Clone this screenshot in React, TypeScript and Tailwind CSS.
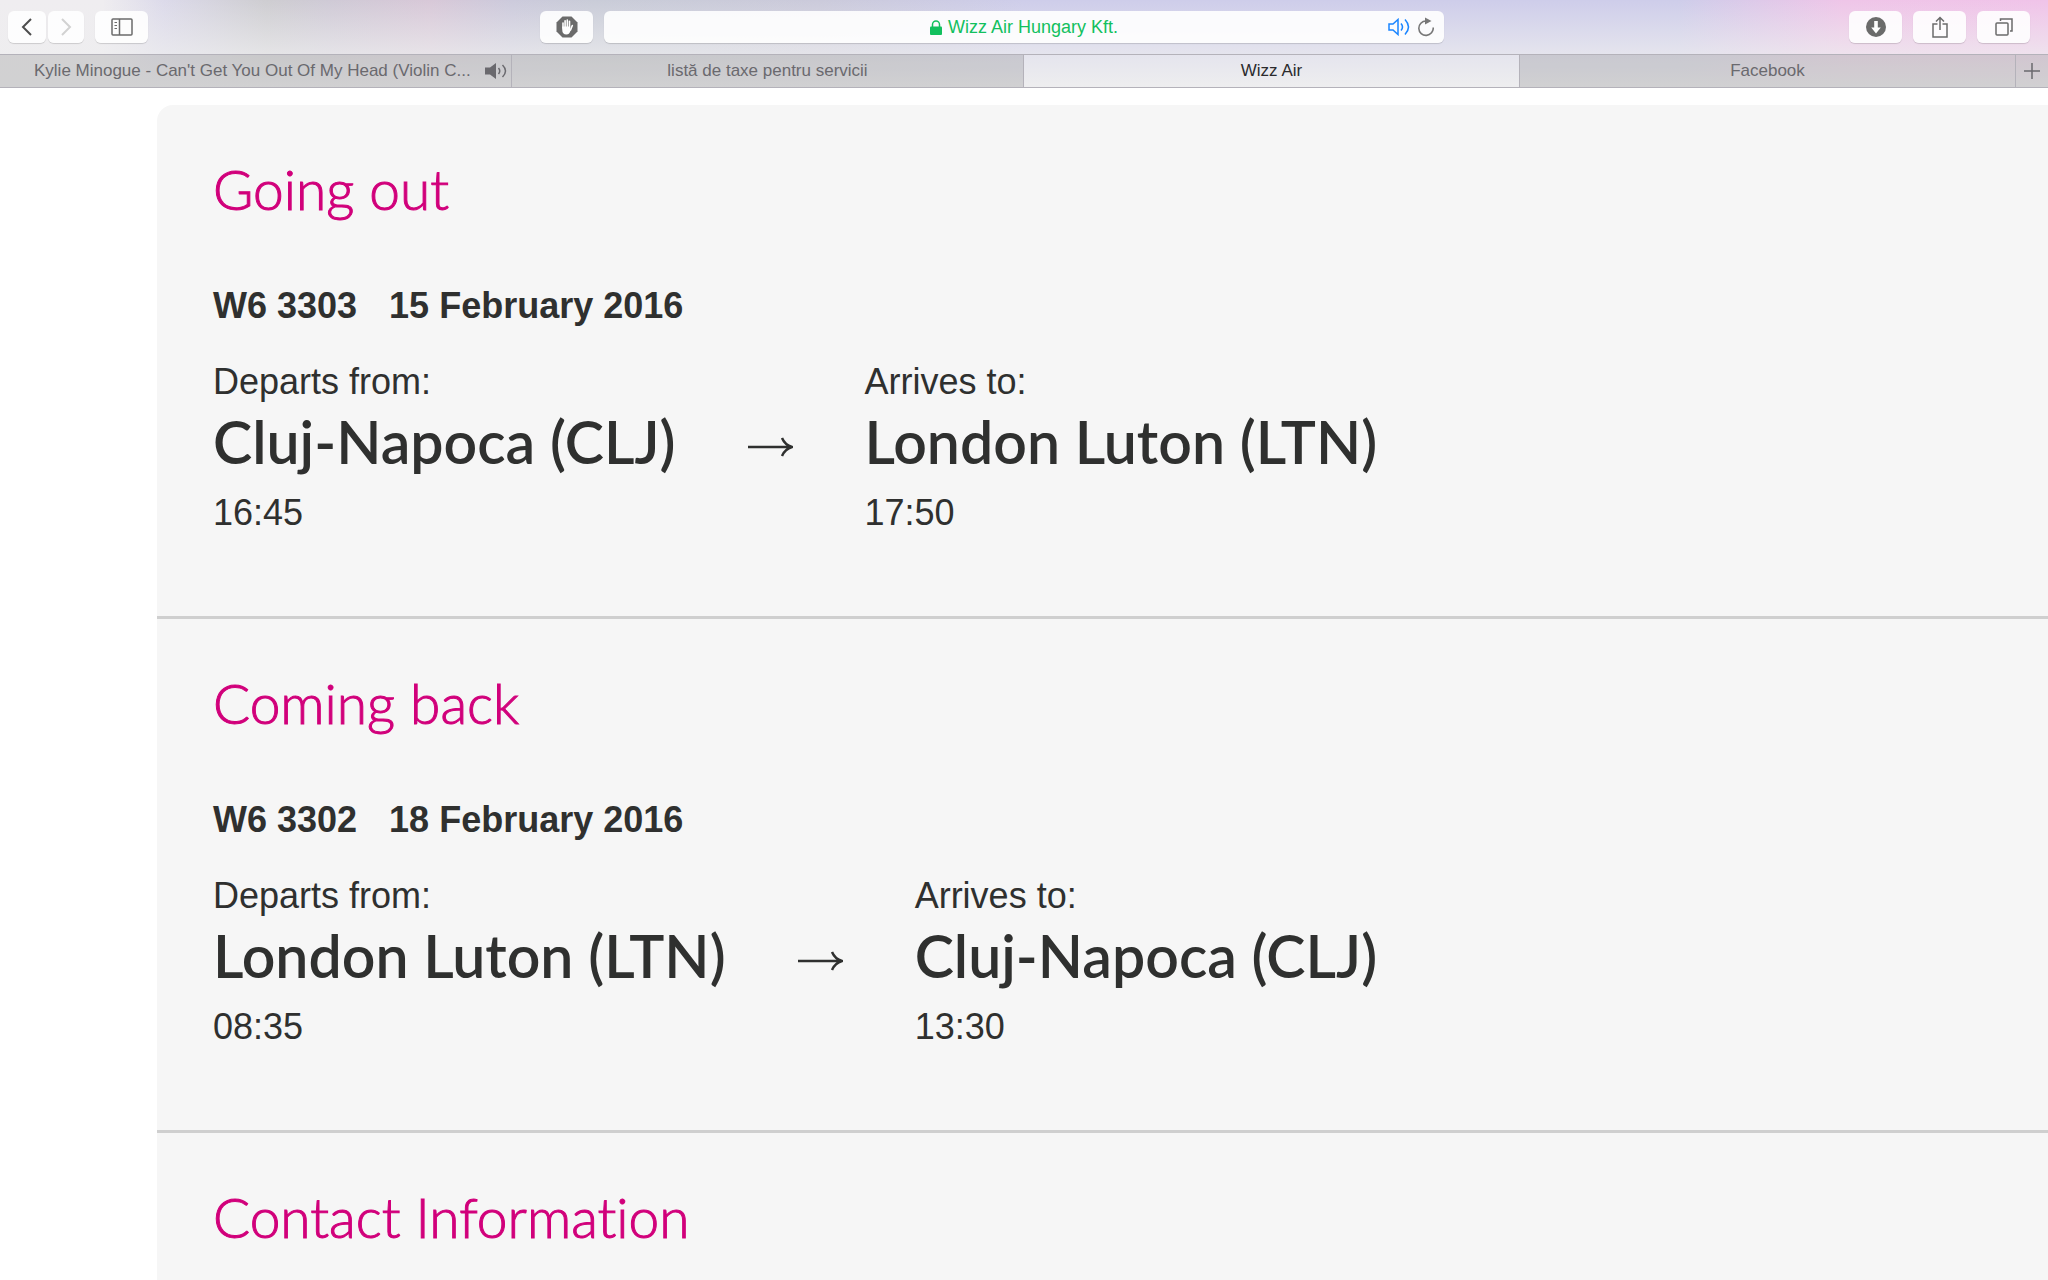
import type { ReactNode } from "react"

const legs = [
  {
    title: "Going out",
    flight: "W6 3303",
    date: "15 February 2016",
    from: { city: "Cluj-Napoca (CLJ)", time: "16:45" },
    to: { city: "London Luton (LTN)", time: "17:50" },
  },
  {
    title: "Coming back",
    flight: "W6 3302",
    date: "18 February 2016",
    from: { city: "London Luton (LTN)", time: "08:35" },
    to: { city: "Cluj-Napoca (CLJ)", time: "13:30" },
  },
]

function ToolbarButton({ label, className, children }: { label: string; className: string; children: ReactNode }) {
  return (
    <button
      type="button"
      aria-label={label}
      className={`flex h-8 shrink-0 items-center justify-center rounded-md bg-white/90 text-[#6b6b6b] shadow-[0_1px_1px_rgba(0,0,0,0.15)] ${className}`}
    >
      {children}
    </button>
  )
}

function Toolbar() {
  return (
    <div className="flex h-[54px] items-center px-2">
      <div className="flex flex-1 items-center">
        <ToolbarButton label="Back" className="w-[38px]">
          <svg width="12" height="18" viewBox="0 0 12 18" fill="none" stroke="#4d4d4d" strokeWidth="2">
            <path d="M10 1 2 9l8 8" />
          </svg>
        </ToolbarButton>
        <ToolbarButton label="Forward" className="ml-0.5 w-9">
          <svg width="12" height="18" viewBox="0 0 12 18" fill="none" stroke="#d2d2d2" strokeWidth="2">
            <path d="m2 1 8 8-8 8" />
          </svg>
        </ToolbarButton>
        <ToolbarButton label="Show sidebar" className="ml-[11px] w-[53px]">
          <svg width="22" height="18" viewBox="0 0 22 18" fill="none" stroke="currentColor">
            <rect x="1" y="1" width="20" height="16" rx="1" strokeWidth="1.5" />
            <path d="M8.5 1v16" strokeWidth="1.5" />
            <path d="M3.500 4.500h2.500M3.500 7.500h2.500M3.500 10.500h2.500" />
          </svg>
        </ToolbarButton>
        <ToolbarButton label="Content blocker" className="ml-auto w-[53px]">
          <svg width="22" height="22" viewBox="0 0 22 22">
            <path d="M6.500.5h9l6 6v9l-6 6h-9l-6-6v-9z" fill="currentColor" />
            <g stroke="#fff" strokeWidth="1.600" strokeLinecap="round">
              <path d="M7 12V7M9.100 11V4.800M11.300 11V4M13.500 11V5.200" />
              <path d="m14.500 14 1.800-4.500" />
            </g>
            <path d="M6.200 10.500h8.100v2.500l1.200-1-1.300 3.500q-.9 3-3.700 3-4.300 0-4.300-5z" fill="#fff" />
          </svg>
        </ToolbarButton>
      </div>

      <div className="mx-[11px] flex h-8 w-[41.3%] items-center rounded-md bg-white/90 shadow-[0_1px_1px_rgba(0,0,0,0.15)]">
        <div className="flex flex-1 items-center justify-center gap-1.5 pl-14 text-lg text-[#12c05e]">
          <svg width="12" height="15" viewBox="0 0 12 15" fill="none">
            <rect y="6.500" width="12" height="8.500" rx="1" fill="currentColor" />
            <path d="M2.500 7V4.500a3.500 3.500 0 0 1 7 0V7" stroke="currentColor" strokeWidth="1.500" />
          </svg>
          <span>Wizz Air Hungary Kft.</span>
        </div>
        <button type="button" aria-label="Mute tab" className="mr-2 text-[#1a85ff]">
          <svg width="22" height="18" viewBox="0 0 22 18" fill="none" stroke="currentColor" strokeWidth="1.500">
            <path d="M1 6h4l5-4.500v15L5 12H1z" />
            <path d="M13 5.500q3 3.500 0 7M17 1.500q7 7.500 0 15" />
          </svg>
        </button>
        <button type="button" aria-label="Reload" className="mr-2.5 text-[#777]">
          <svg width="16" height="20" viewBox="0 0 16 20" fill="none">
            <path d="M8 4A7.200 7.200 0 1 0 15.200 10.500" stroke="currentColor" strokeWidth="1.600" />
            <path d="M7 .5v7l6.500-3.500z" fill="currentColor" />
          </svg>
        </button>
      </div>

      <div className="flex flex-1 items-center justify-end gap-[11px]">
        <ToolbarButton label="Downloads" className="w-[53px]">
          <svg width="20" height="20" viewBox="0 0 20 20">
            <circle cx="10" cy="10" r="10" fill="currentColor" />
            <path d="M8.200 4h3.600v6.500h3L10 16.500l-4.800-6h3z" fill="#fff" />
          </svg>
        </ToolbarButton>
        <ToolbarButton label="Share" className="w-[53px]">
          <svg width="16" height="22" viewBox="0 0 16 22" fill="none" stroke="currentColor" strokeWidth="1.500">
            <path d="M5.500 8H1v13h14V8h-4.500M8 14V1.500M4 5.500l4-4 4 4" />
          </svg>
        </ToolbarButton>
        <ToolbarButton label="Show all tabs" className="mr-2.5 w-[53px]">
          <svg width="18" height="18" viewBox="0 0 18 18" fill="none" stroke="currentColor" strokeWidth="1.500">
            <rect x="1" y="5" width="12" height="12" rx="1" />
            <path d="M5.500 3V1H17v12h-2" />
          </svg>
        </ToolbarButton>
      </div>
    </div>
  )
}

function TabBar() {
  return (
    <div className="flex h-[34px] border-y border-[#b4b2ba] text-[17px] text-[#6a696e]">
      <button type="button" className="flex basis-1/4 items-center justify-between border-r border-[#b4b2ba] bg-black/12 pr-1 pl-[34px]">
        <span className="truncate">Kylie Minogue - Can't Get You Out Of My Head (Violin C...</span>
        <svg className="shrink-0" width="22" height="16" viewBox="0 0 22 16" fill="none" stroke="currentColor" strokeWidth="1.500">
          <path d="M0 4.500h5L11 0v16l-6-4.500H0z" fill="currentColor" stroke="none" />
          <path d="M13.500 5q2.500 3 0 6M17.500 2q6 6 0 12" />
        </svg>
      </button>
      <button type="button" className="basis-1/4 border-r border-[#b4b2ba] bg-black/12">
        listă de taxe pentru servicii
      </button>
      <button type="button" className="flex-1 border-r border-[#b4b2ba] text-[#2b2b2d]">
        Wizz Air
      </button>
      <button type="button" className="flex-1 border-r border-[#b4b2ba] bg-black/12">
        Facebook
      </button>
      <button type="button" aria-label="New tab" className="flex w-8 items-center justify-center bg-black/12">
        <svg width="16" height="16" viewBox="0 0 16 16" fill="none" stroke="currentColor" strokeWidth="1.500">
          <path d="M8 0v16M0 8h16" />
        </svg>
      </button>
    </div>
  )
}

function Stop({ label, city, time }: { label: string; city: string; time: string }) {
  return (
    <div>
      <p className="text-4xl leading-[40px]">{label}</p>
      <p className="mt-2 mb-[19px] font-[Lato] text-[59px] leading-[64px] font-semibold">{city}</p>
      <p className="text-4xl leading-[40px]">{time}</p>
    </div>
  )
}

function SectionTitle({ children }: { children: ReactNode }) {
  return (
    <h2 className="font-[Lato] text-[55px] leading-[64px] font-light text-[#d1007b] [-webkit-text-stroke:1px] [font-variant-ligatures:none]">
      {children}
    </h2>
  )
}

export default function App() {
  return (
    <div className="flex min-h-screen flex-col overflow-x-hidden bg-white font-['Liberation_Sans',Arial,sans-serif]">
      <header className="bg-[linear-gradient(to_bottom,transparent,#eeeeefb0_60%,#eeeeef),linear-gradient(to_right,#efedf0_5%,#dcdaea_8%,#cecdd1_13%,#cfcad6_16%,#d8c8d8_21%,#cccadc_25%,#c9ccd8_29%,#cbcadb_40%,#cecdea_50%,#cecdea_82%,#efc5e8_90%,#f0c3e9)]">
        <Toolbar />
        <TabBar />
      </header>

      <main className="mt-[17px] ml-[157px] flex-1 rounded-tl-2xl bg-[#f6f6f6] text-[#2f302f]">
        {legs.map((leg) => (
          <section key={leg.flight} className="border-b-[3px] border-[#cfcfcf] pt-[52px] pb-[83px] pl-14">
            <SectionTitle>{leg.title}</SectionTitle>
            <p className="mt-[65px] flex gap-8 text-4xl leading-[40px] font-bold">
              <span>{leg.flight}</span>
              <span>{leg.date}</span>
            </p>
            <div className="mt-9 flex items-center">
              <Stop label="Departs from:" city={leg.from.city} time={leg.from.time} />
              <svg className="mx-[72px]" width="45" height="24" viewBox="0 0 45 24" fill="none" stroke="currentColor" strokeWidth="2.500">
                <path d="M0 11h43M34 2q3 7 10 9-7 2-10 9" />
              </svg>
              <Stop label="Arrives to:" city={leg.to.city} time={leg.to.time} />
            </div>
          </section>
        ))}
        <section className="pt-[52px] pl-14">
          <SectionTitle>Contact Information</SectionTitle>
        </section>
      </main>
    </div>
  )
}
